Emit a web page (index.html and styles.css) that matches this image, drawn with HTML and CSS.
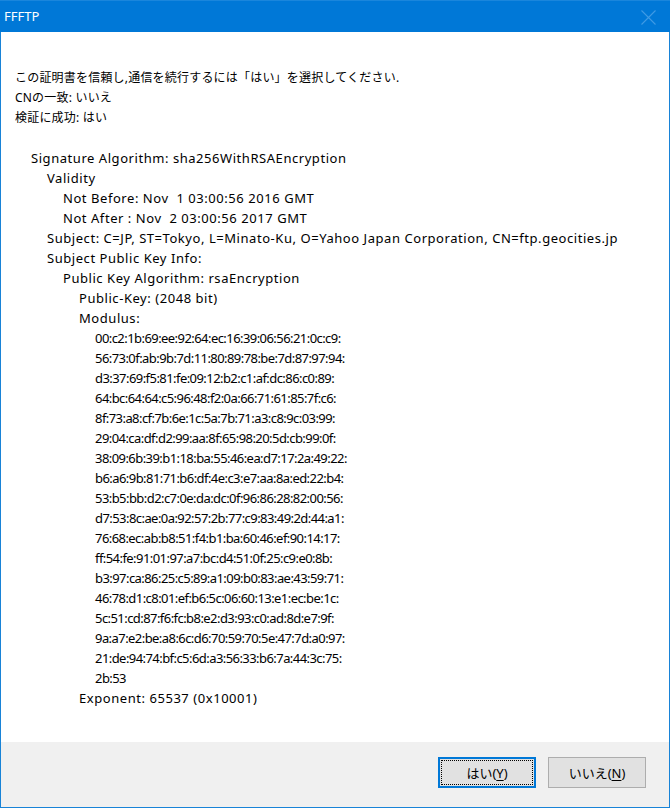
FILE: index.html
```html
<!DOCTYPE html>
<html lang="ja">
<head>
<meta charset="utf-8">
<title>FFFTP</title>
<link rel="stylesheet" href="styles.css">
</head>
<body>
<div class="window">
  <div class="titlebar">
    <span class="title">FFFTP</span>
    <svg class="close" width="15" height="15" viewBox="0 0 15 15"><path d="M0.5 0.5 L14.5 14.5 M14.5 0.5 L0.5 14.5" stroke="#3f9be4" stroke-width="1.1" fill="none"/></svg>
  </div>
  <div class="content">
    <div class="line jp">この証明書を信頼し,通信を続行するには「はい」を選択してください.</div>
    <div class="line jp">CNの一致: いいえ</div>
    <div class="line jp">検証に成功: はい</div>
    <div class="line blank"></div>
    <div class="line l1">Signature Algorithm: sha256WithRSAEncryption</div>
    <div class="line l2">Validity</div>
    <div class="line l3">Not Before: Nov&nbsp;&nbsp;1 03:00:56 2016 GMT</div>
    <div class="line l3">Not After : Nov&nbsp;&nbsp;2 03:00:56 2017 GMT</div>
    <div class="line l2">Subject: C=JP, ST=Tokyo, L=Minato-Ku, O=Yahoo Japan Corporation, CN=ftp.geocities.jp</div>
    <div class="line l2">Subject Public Key Info:</div>
    <div class="line l3">Public Key Algorithm: rsaEncryption</div>
    <div class="line l4">Public-Key: (2048 bit)</div>
    <div class="line l4">Modulus:</div>
    <div class="line l5 hex">00:c2:1b:69:ee:92:64:ec:16:39:06:56:21:0c:c9:</div>
    <div class="line l5 hex">56:73:0f:ab:9b:7d:11:80:89:78:be:7d:87:97:94:</div>
    <div class="line l5 hex">d3:37:69:f5:81:fe:09:12:b2:c1:af:dc:86:c0:89:</div>
    <div class="line l5 hex">64:bc:64:64:c5:96:48:f2:0a:66:71:61:85:7f:c6:</div>
    <div class="line l5 hex">8f:73:a8:cf:7b:6e:1c:5a:7b:71:a3:c8:9c:03:99:</div>
    <div class="line l5 hex">29:04:ca:df:d2:99:aa:8f:65:98:20:5d:cb:99:0f:</div>
    <div class="line l5 hex">38:09:6b:39:b1:18:ba:55:46:ea:d7:17:2a:49:22:</div>
    <div class="line l5 hex">b6:a6:9b:81:71:b6:df:4e:c3:e7:aa:8a:ed:22:b4:</div>
    <div class="line l5 hex">53:b5:bb:d2:c7:0e:da:dc:0f:96:86:28:82:00:56:</div>
    <div class="line l5 hex">d7:53:8c:ae:0a:92:57:2b:77:c9:83:49:2d:44:a1:</div>
    <div class="line l5 hex">76:68:ec:ab:b8:51:f4:b1:ba:60:46:ef:90:14:17:</div>
    <div class="line l5 hex">ff:54:fe:91:01:97:a7:bc:d4:51:0f:25:c9:e0:8b:</div>
    <div class="line l5 hex">b3:97:ca:86:25:c5:89:a1:09:b0:83:ae:43:59:71:</div>
    <div class="line l5 hex">46:78:d1:c8:01:ef:b6:5c:06:60:13:e1:ec:be:1c:</div>
    <div class="line l5 hex">5c:51:cd:87:f6:fc:b8:e2:d3:93:c0:ad:8d:e7:9f:</div>
    <div class="line l5 hex">9a:a7:e2:be:a8:6c:d6:70:59:70:5e:47:7d:a0:97:</div>
    <div class="line l5 hex">21:de:94:74:bf:c5:6d:a3:56:33:b6:7a:44:3c:75:</div>
    <div class="line l5 hex">2b:53</div>
    <div class="line l4">Exponent: 65537 (0x10001)</div>
  </div>
  <div class="footer">
    <button class="btn btn-default"><span class="focus">はい(<u>Y</u>)</span></button>
    <button class="btn">いいえ(<u>N</u>)</button>
  </div>
</div>
</body>
</html>
```
FILE: styles.css
```css
html, body {
  margin: 0;
  padding: 0;
  background: #ffffff;
}
body {
  font-family: "Noto Sans", "Noto Sans CJK JP", sans-serif;
  font-size: 12px;
  color: #000000;
}
.window {
  width: 670px;
  height: 808px;
  display: flex;
  flex-direction: column;
  box-sizing: border-box;
}
.titlebar {
  height: 32px;
  flex: none;
  background: #0078d7;
  display: flex;
  align-items: center;
  justify-content: space-between;
  padding: 0 14px 0 4px;
  box-sizing: border-box;
  border-top: 1px solid #1a86dc;
}
.title {
  color: #ffffff;
  font-size: 13px;
  margin-top: -1px;
}
.close {
  display: block;
  margin-top: 1px;
}
.content {
  flex: 1;
  background: #ffffff;
  border-left: 1px solid #1883d7;
  border-right: 1px solid #1883d7;
  padding: 36px 0 0 14px;
  box-sizing: border-box;
}
.line {
  height: 20px;
  line-height: 20px;
  white-space: nowrap;
  font-size: 13px;
  letter-spacing: 0.55px;
}
.line.jp {
  font-size: 12px;
  letter-spacing: 0.2px;
}
.line.hex {
  font-size: 13px;
  letter-spacing: -0.56px;
}
.l1 { padding-left: 16px; }
.l2 { padding-left: 32px; }
.l3 { padding-left: 48px; }
.l4 { padding-left: 64px; }
.l5 { padding-left: 80px; }
.footer {
  height: 66px;
  flex: none;
  background: #f0f0f0;
  border: 1px solid #1883d7;
  border-top: none;
  box-sizing: border-box;
  display: flex;
  justify-content: flex-end;
  align-items: flex-start;
  gap: 12px;
  padding: 15px 23px 0 0;
}
.btn {
  width: 98px;
  height: 31px;
  margin: 0;
  padding: 0;
  background: #e1e1e1;
  border: 1px solid #adadad;
  font-family: "Noto Sans", "Noto Sans CJK JP", sans-serif;
  font-size: 13px;
  color: #000000;
  display: flex;
  align-items: center;
  justify-content: center;
  box-sizing: border-box;
}
.btn-default {
  border: 2px solid #0078d7;
  padding: 1px;
}
.focus {
  flex: 1;
  align-self: stretch;
  display: flex;
  align-items: center;
  justify-content: center;
  border: 1px dotted #000000;
}
u {
  text-decoration-thickness: 1px;
  text-underline-offset: 2px;
}
```
